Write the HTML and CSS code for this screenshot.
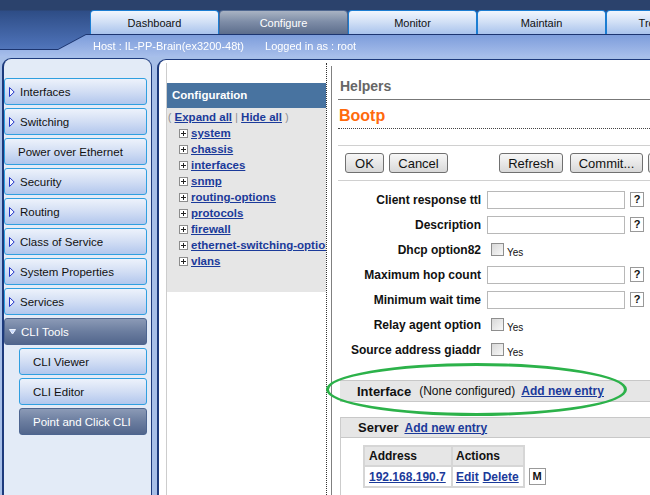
FILE: index.html
```html
<!DOCTYPE html>
<html lang="en">
<head>
    <meta charset="UTF-8">
    <title>J-Web - Point and Click CLI</title>
    <link rel="stylesheet" href="styles.css">
</head>
<body>
    <header class="top">
        <nav class="tabs">
            <div class="tab">Dashboard</div>
            <div class="tab active">Configure</div>
            <div class="tab">Monitor</div>
            <div class="tab">Maintain</div>
            <div class="tab">Troubleshoot</div>
        </nav>
        <div class="hostwrap">
            <div class="hostbar">
                <span>Host : IL-PP-Brain(ex3200-48t)</span>
                <span>Logged in as : root</span>
            </div>
        </div>
    </header>

    <div class="main">
        <aside class="sidebar">
            <div class="navbtn"><svg class="tri" width="6" height="10" viewBox="0 0 6 10"><path d="M0.5 0.5 L5.2 5 L0.5 9.5 Z" fill="#f4f7ff" stroke="#2233c8"/></svg>Interfaces</div>
            <div class="navbtn"><svg class="tri" width="6" height="10" viewBox="0 0 6 10"><path d="M0.5 0.5 L5.2 5 L0.5 9.5 Z" fill="#f4f7ff" stroke="#2233c8"/></svg>Switching</div>
            <div class="navbtn plain">Power over Ethernet</div>
            <div class="navbtn"><svg class="tri" width="6" height="10" viewBox="0 0 6 10"><path d="M0.5 0.5 L5.2 5 L0.5 9.5 Z" fill="#f4f7ff" stroke="#2233c8"/></svg>Security</div>
            <div class="navbtn"><svg class="tri" width="6" height="10" viewBox="0 0 6 10"><path d="M0.5 0.5 L5.2 5 L0.5 9.5 Z" fill="#f4f7ff" stroke="#2233c8"/></svg>Routing</div>
            <div class="navbtn"><svg class="tri" width="6" height="10" viewBox="0 0 6 10"><path d="M0.5 0.5 L5.2 5 L0.5 9.5 Z" fill="#f4f7ff" stroke="#2233c8"/></svg>Class of Service</div>
            <div class="navbtn"><svg class="tri" width="6" height="10" viewBox="0 0 6 10"><path d="M0.5 0.5 L5.2 5 L0.5 9.5 Z" fill="#f4f7ff" stroke="#2233c8"/></svg>System Properties</div>
            <div class="navbtn"><svg class="tri" width="6" height="10" viewBox="0 0 6 10"><path d="M0.5 0.5 L5.2 5 L0.5 9.5 Z" fill="#f4f7ff" stroke="#2233c8"/></svg>Services</div>
            <div class="navbtn dark"><svg class="tri-down" width="7" height="6" viewBox="0 0 7 6"><path d="M0.5 0.5 H6.5 L3.5 5 Z" fill="#c9dafc" stroke="#eef4ff"/></svg>CLI Tools</div>
            <div class="navbtn sub">CLI Viewer</div>
            <div class="navbtn sub">CLI Editor</div>
            <div class="navbtn sub dark">Point and Click CLI</div>
        </aside>

        <section class="content">
            <div class="tree">
                <div class="tree-head">Configuration</div>
                <div class="tree-body">
                    <div class="tree-links"><span class="paren">(</span> <a href="#">Expand all</a> <span class="paren">|</span> <a href="#">Hide all</a> <span class="paren">)</span></div>
                    <div class="tree-item"><svg class="plus" width="9" height="9" viewBox="0 0 9 9"><rect x="0.5" y="0.5" width="8" height="8" fill="#fff" stroke="#8c8c8c"/><path d="M2 4.5h5M4.5 2v5" stroke="#222"/></svg><a href="#">system</a></div>
                    <div class="tree-item"><svg class="plus" width="9" height="9" viewBox="0 0 9 9"><rect x="0.5" y="0.5" width="8" height="8" fill="#fff" stroke="#8c8c8c"/><path d="M2 4.5h5M4.5 2v5" stroke="#222"/></svg><a href="#">chassis</a></div>
                    <div class="tree-item"><svg class="plus" width="9" height="9" viewBox="0 0 9 9"><rect x="0.5" y="0.5" width="8" height="8" fill="#fff" stroke="#8c8c8c"/><path d="M2 4.5h5M4.5 2v5" stroke="#222"/></svg><a href="#">interfaces</a></div>
                    <div class="tree-item"><svg class="plus" width="9" height="9" viewBox="0 0 9 9"><rect x="0.5" y="0.5" width="8" height="8" fill="#fff" stroke="#8c8c8c"/><path d="M2 4.5h5M4.5 2v5" stroke="#222"/></svg><a href="#">snmp</a></div>
                    <div class="tree-item"><svg class="plus" width="9" height="9" viewBox="0 0 9 9"><rect x="0.5" y="0.5" width="8" height="8" fill="#fff" stroke="#8c8c8c"/><path d="M2 4.5h5M4.5 2v5" stroke="#222"/></svg><a href="#">routing-options</a></div>
                    <div class="tree-item"><svg class="plus" width="9" height="9" viewBox="0 0 9 9"><rect x="0.5" y="0.5" width="8" height="8" fill="#fff" stroke="#8c8c8c"/><path d="M2 4.5h5M4.5 2v5" stroke="#222"/></svg><a href="#">protocols</a></div>
                    <div class="tree-item"><svg class="plus" width="9" height="9" viewBox="0 0 9 9"><rect x="0.5" y="0.5" width="8" height="8" fill="#fff" stroke="#8c8c8c"/><path d="M2 4.5h5M4.5 2v5" stroke="#222"/></svg><a href="#">firewall</a></div>
                    <div class="tree-item"><svg class="plus" width="9" height="9" viewBox="0 0 9 9"><rect x="0.5" y="0.5" width="8" height="8" fill="#fff" stroke="#8c8c8c"/><path d="M2 4.5h5M4.5 2v5" stroke="#222"/></svg><a href="#">ethernet-switching-options</a></div>
                    <div class="tree-item"><svg class="plus" width="9" height="9" viewBox="0 0 9 9"><rect x="0.5" y="0.5" width="8" height="8" fill="#fff" stroke="#8c8c8c"/><path d="M2 4.5h5M4.5 2v5" stroke="#222"/></svg><a href="#">vlans</a></div>
                </div>
            </div>

            <div class="panel">
                <h2 class="title">Helpers</h2>
                <h3 class="subtitle">Bootp</h3>

                <div class="toolbar">
                    <button class="btn w-ok">OK</button>
                    <button class="btn w-cancel">Cancel</button>
                    <button class="btn w-refresh">Refresh</button>
                    <button class="btn w-commit">Commit...</button>
                    <button class="btn w-more">Discard</button>
                </div>

                <div class="form">
                    <div class="row"><label>Client response ttl</label><input type="text" class="field"><span class="help">?</span></div>
                    <div class="row"><label>Description</label><input type="text" class="field"><span class="help">?</span></div>
                    <div class="row"><label>Dhcp option82</label><span class="check"></span><span class="yes">Yes</span></div>
                    <div class="row"><label>Maximum hop count</label><input type="text" class="field"><span class="help">?</span></div>
                    <div class="row"><label>Minimum wait time</label><input type="text" class="field"><span class="help">?</span></div>
                    <div class="row"><label>Relay agent option</label><span class="check"></span><span class="yes">Yes</span></div>
                    <div class="row"><label>Source address giaddr</label><span class="check"></span><span class="yes">Yes</span></div>
                </div>

                <div class="section-bar">
                    <span class="section-name">Interface</span>
                    <span class="none">(None configured)</span>
                    <a href="#" class="add">Add new entry</a>
                </div>

                <div class="server">
                    <div class="server-head">
                        <span class="section-name">Server</span>
                        <a href="#" class="add">Add new entry</a>
                    </div>
                    <div class="server-body">
                        <table class="entries">
                            <tr><th class="c1">Address</th><th class="c2">Actions</th></tr>
                            <tr><td class="c1"><a href="#">192.168.190.7</a></td><td class="c2"><a href="#" class="act">Edit</a><a href="#" class="act">Delete</a></td></tr>
                        </table>
                        <span class="mbtn">M</span>
                    </div>
                </div>
            </div>
        </section>
    </div>

    <div class="highlight"></div>
</body>
</html>
```

FILE: styles.css
```css
body {
    margin: 0;
    width: 650px;
    height: 495px;
    overflow: hidden;
    position: relative;
    background-color: #a7bfe8;
    font-family: "Liberation Sans", Arial, sans-serif;
    color: #111;
}
a {
    color: #1b3a9a;
    font-weight: bold;
    text-decoration: underline;
}

/* header */
.top {
    height: 57px;
    background: linear-gradient(#2b426c 0, #2b426c 10px, #2e4d86 11px, #4b6fb4 44px, #5c80c4 57px);
}
.tabs {
    display: flex;
    padding: 10px 0 0 90px;
    height: 25px;
    overflow: hidden;
}
.tab {
    flex: none;
    width: 129px;
    height: 25px;
    box-sizing: border-box;
    border: 1px solid #1b7dd2;
    border-bottom-color: #2a6cc0;
    border-radius: 4px 4px 0 0;
    background: linear-gradient(#f1f6fd, #d3e1f6 45%, #a9c3ec);
    font-size: 11px;
    line-height: 25px;
    text-align: center;
    color: #111;
}
.tab.active {
    background: linear-gradient(#a9b3c3, #7f8ea8 45%, #5c6d8c);
    border-color: #4f6790;
    color: #fff;
}
.hostwrap {
    filter: drop-shadow(0 -1px 0 #1c3570);
}
.hostbar {
    height: 22px;
    clip-path: polygon(0 15px, 58px 15px, 86px 0, 100% 0, 100% 100%, 0 100%);
    background: linear-gradient(#7d9ddb, #a8bfeb);
    color: #fff;
    font-size: 11px;
    line-height: 23px;
    padding-left: 93px;
    display: flex;
    gap: 21px;
}

/* layout */
.main {
    display: flex;
    height: 438px;
}
.sidebar {
    flex: none;
    width: 150px;
    margin: 1px 0 0 2px;
    box-sizing: border-box;
    border: 1px solid #1d3a7c;
    border-left-width: 2px;
    border-bottom: none;
    border-radius: 9px 9px 0 0;
    background-color: #e3ebf7;
    padding-top: 19px;
}
.navbtn {
    display: flex;
    align-items: center;
    gap: 5px;
    width: 143px;
    height: 27px;
    box-sizing: border-box;
    margin-bottom: 3px;
    padding-left: 4px;
    border: 1px solid #2f9fe0;
    border-radius: 3px;
    background: linear-gradient(#edf2fb, #d2def4 50%, #b2c7ed);
    font-size: 11.5px;
    color: #111;
    white-space: nowrap;
}
.navbtn.plain {
    padding-left: 13px;
}
.navbtn.dark {
    background: linear-gradient(#8b9ab6, #6b7d9f 50%, #52668c);
    border-color: #4d6590;
    color: #fff;
}
.navbtn.sub {
    width: 128px;
    margin-left: 15px;
    padding-left: 13px;
}

/* content area */
.content {
    flex: 1;
    min-width: 0;
    margin: 2px 0 0 5px;
    border-top: 1px solid #1d3a7c;
    border-left: 2px solid #1d3a7c;
    border-radius: 9px 0 0 0;
    background-color: #fff;
    display: flex;
    padding: 3px 0 0 7px;
    overflow: hidden;
}
.tree {
    flex: none;
    width: 161px;
    box-sizing: border-box;
    border-left: 1px solid #cdcdcd;
    border-right: 1px dotted #333;
    padding-top: 20px;
    overflow: hidden;
}
.tree-head {
    height: 25px;
    line-height: 25px;
    background-color: #4873a0;
    color: #fff;
    font-weight: bold;
    font-size: 11.5px;
    padding-left: 5px;
}
.tree-body {
    background-color: #e6e6e6;
    padding: 1px 0 23px 0;
}
.tree-links {
    height: 16px;
    line-height: 16px;
    padding-left: 1px;
    font-size: 11.5px;
    white-space: nowrap;
}
.paren {
    color: #8a8a8a;
    font-size: 10px;
}
.tree-item {
    display: flex;
    align-items: center;
    height: 16px;
    padding-left: 12px;
    font-size: 11.5px;
    white-space: nowrap;
}
.plus {
    flex: none;
    margin-right: 3px;
}

.panel {
    flex: 1;
    min-width: 0;
    margin: 3px 0 0 4px;
    border-left: 1px solid #808080;
    padding-left: 6px;
    overflow: hidden;
}
.title {
    margin: 0;
    font-size: 14px;
    font-weight: bold;
    color: #666;
    line-height: 16px;
    padding: 12px 0 5px 2px;
    border-bottom: 1px solid #777;
}
.subtitle {
    margin: 6px 0 0 0;
    font-size: 16px;
    font-weight: bold;
    color: #ff6a0d;
    line-height: 20px;
    padding: 0 0 2px 1px;
    border-bottom: 1px dotted #444;
}
.toolbar {
    display: flex;
    margin-top: 16px;
    border-top: 1px solid #d0d0d0;
    border-bottom: 1px solid #d0d0d0;
    padding: 7px 0 7px 7px;
}
.btn {
    flex: none;
    height: 20px;
    box-sizing: border-box;
    border: 1px solid #707070;
    border-radius: 3px;
    background: linear-gradient(#f7f7f7, #e8e8e8 50%, #d8d8d8);
    font-family: "Liberation Sans", Arial, sans-serif;
    font-size: 13px;
    color: #111;
    padding: 0;
}
.w-ok { width: 39px; }
.w-cancel { width: 59px; margin-left: 5px; }
.w-refresh { width: 64px; margin-left: 51px; }
.w-commit { width: 73px; margin-left: 7px; }
.w-more { width: 60px; margin-left: 5px; }

.form {
    padding-top: 6px;
}
.row {
    display: flex;
    align-items: center;
    height: 25px;
}
.row label {
    flex: none;
    width: 143px;
    text-align: right;
    font-size: 12px;
    font-weight: bold;
    white-space: nowrap;
}
.field {
    flex: none;
    width: 138px;
    height: 18px;
    box-sizing: border-box;
    margin: 0 0 0 6px;
    border: 1px solid #b8b8b8;
    background-color: #fff;
}
.help {
    flex: none;
    width: 14px;
    height: 15px;
    box-sizing: border-box;
    margin-left: 5px;
    border: 1px solid #999;
    background-color: #fff;
    font-size: 11px;
    font-weight: bold;
    line-height: 13px;
    text-align: center;
}
.check {
    flex: none;
    width: 13px;
    height: 13px;
    box-sizing: border-box;
    margin-left: 10px;
    border: 1px solid #8e8e8e;
    background: linear-gradient(135deg, #d8d8d8, #f8f8f8);
}
.yes {
    font-size: 10px;
    margin-left: 3px;
    padding-top: 5px;
}

.section-name {
    font-size: 13px;
    font-weight: bold;
}
.section-bar {
    display: flex;
    align-items: center;
    height: 22px;
    box-sizing: border-box;
    margin: 18px 0 0 2px;
    padding-left: 17px;
    border-top: 1px solid #c8c8c8;
    border-bottom: 1px solid #c8c8c8;
    background-color: #e6e6e6;
    white-space: nowrap;
}
.none {
    font-size: 12px;
    margin-left: 8px;
}
.add {
    font-size: 12px;
    margin-left: 6px;
}
.server {
    margin: 15px 0 0 2px;
    border-left: 1px solid #cccccc;
    height: 80px;
}
.server-head {
    display: flex;
    align-items: center;
    height: 21px;
    box-sizing: border-box;
    padding-left: 17px;
    border-top: 1px solid #c8c8c8;
    border-bottom: 1px solid #c8c8c8;
    background-color: #e6e6e6;
}
.server-body {
    display: flex;
    align-items: flex-end;
    padding: 7px 0 0 22px;
}
.entries {
    border-collapse: collapse;
    font-size: 12px;
}
.entries th,
.entries td {
    border: 2px solid #d6d6d6;
    text-align: left;
    padding: 0 0 0 4px;
    white-space: nowrap;
}
.entries th {
    height: 18px;
    background-color: #e6e6e6;
}
.entries td {
    height: 19px;
}
.entries .c1 { width: 82px; }
.entries .c2 { width: 66px; padding-left: 3px; }
.act {
    margin-right: 4px;
}
.mbtn {
    width: 17px;
    height: 17px;
    box-sizing: border-box;
    margin: 0 0 3px 4px;
    border: 1px solid #999;
    background-color: #fff;
    font-size: 11px;
    font-weight: bold;
    line-height: 15px;
    text-align: center;
}

/* green marker drawn over the screenshot */
.highlight {
    position: absolute;
    left: 326px;
    top: 363px;
    width: 301px;
    height: 53px;
    box-sizing: border-box;
    border: 3.5px solid #2cb24a;
    border-radius: 50%;
}
```
